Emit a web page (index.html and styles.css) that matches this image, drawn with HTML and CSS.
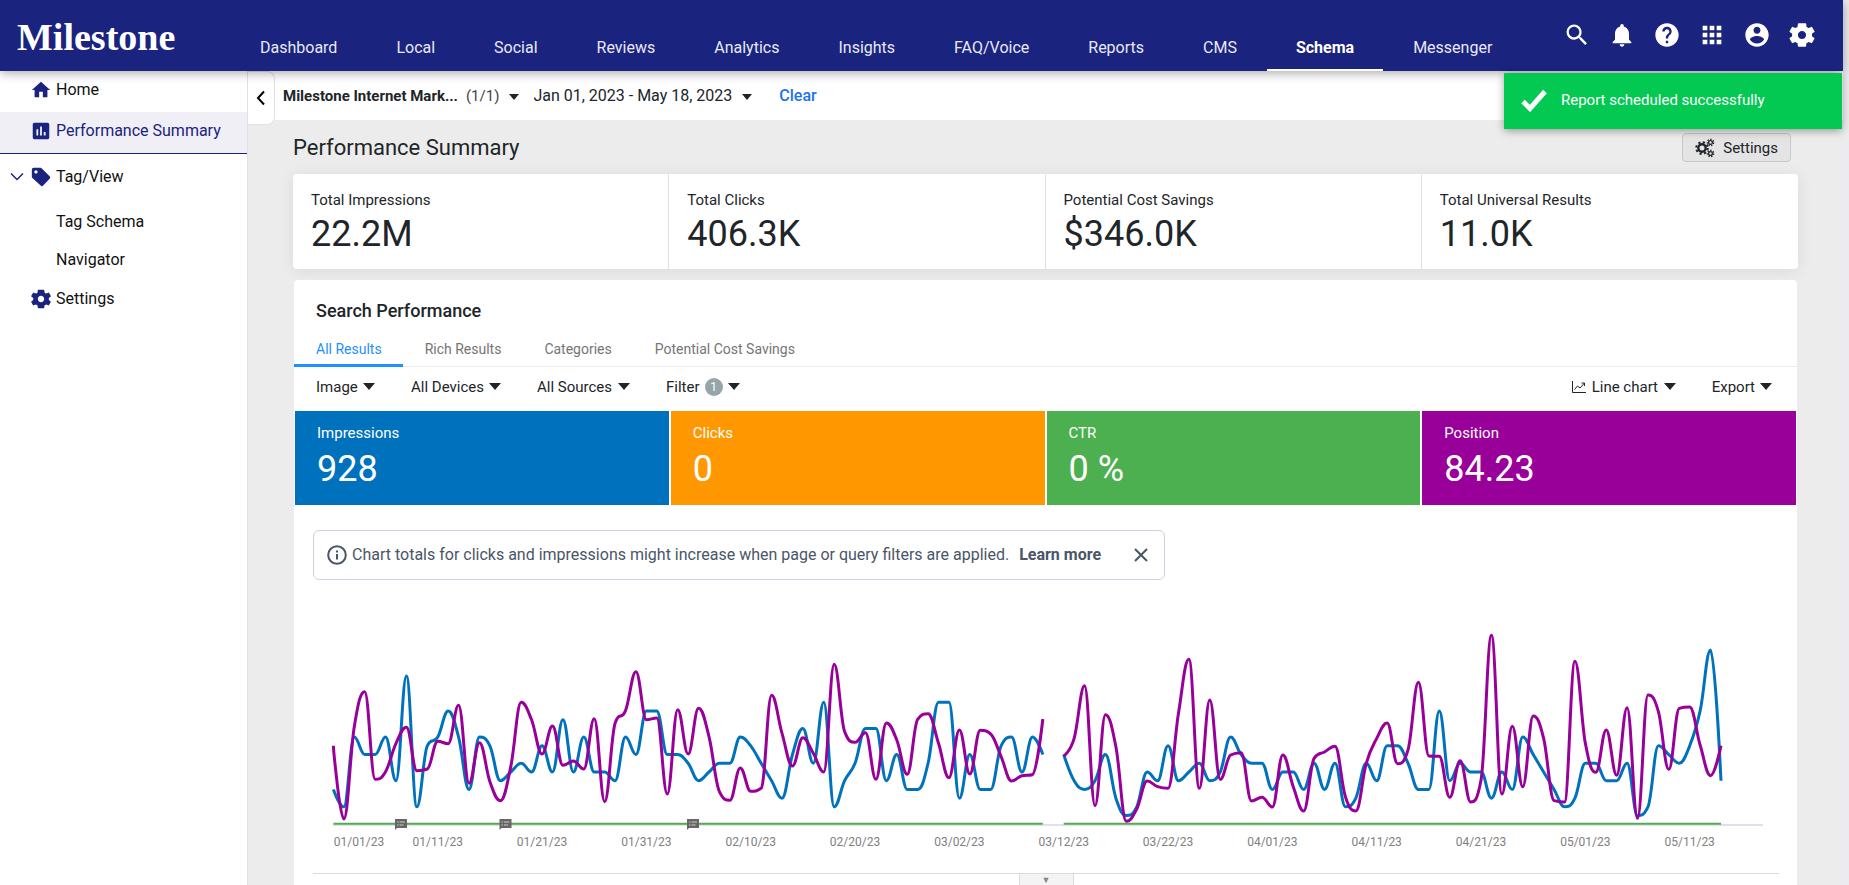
FILE: index.html
```html
<!DOCTYPE html>
<html lang="en">
<head>
<meta charset="utf-8">
<meta name="viewport" content="width=device-width, initial-scale=1">
<title>Performance Summary</title>
<link rel="stylesheet" href="styles.css">
</head>
<body>
<div class="page">
  <header class="topbar">
    <a class="logo" href="#">Milestone</a>
    <nav class="nav" aria-label="Products">
      <a href="#">Dashboard</a><a href="#">Local</a><a href="#">Social</a><a href="#">Reviews</a><a href="#">Analytics</a><a href="#">Insights</a><a href="#">FAQ/Voice</a><a href="#">Reports</a><a href="#">CMS</a><a href="#" class="active" aria-current="page">Schema</a><a href="#">Messenger</a>
    </nav>
    <div class="tools">
      <button aria-label="Search"><svg viewBox="0 0 24 24"><path d="M15.5 14h-.79l-.28-.27A6.47 6.47 0 0 0 16 9.500 6.500 6.500 0 1 0 9.500 16c1.610 0 3.090-.590 4.230-1.570l.270.280v.790l5 4.990L20.490 19zm-6 0C7.010 14 5 11.990 5 9.500S7.010 5 9.500 5 14 7.010 14 9.500 11.990 14 9.500 14z"/></svg></button>
      <button aria-label="Notifications"><svg viewBox="0 0 24 24"><path d="M12 22c1.100 0 2-.900 2-2h-4c0 1.100.890 2 2 2zm6-6v-5c0-3.070-1.640-5.640-4.500-6.320V4c0-.830-.670-1.500-1.500-1.500s-1.500.670-1.500 1.500v.680C7.630 5.360 6 7.920 6 11v5l-2 2v1h16v-1z"/></svg></button>
      <button aria-label="Help"><svg viewBox="0 0 24 24"><path d="M12 2C6.480 2 2 6.480 2 12s4.480 10 10 10 10-4.480 10-10S17.520 2 12 2zm1 17h-2v-2h2zm2.070-7.750-.9.920C13.450 12.900 13 13.500 13 15h-2v-.5c0-1.100.450-2.100 1.170-2.830l1.240-1.260c.370-.360.590-.860.590-1.410 0-1.100-.900-2-2-2s-2 .9-2 2H8c0-2.210 1.790-4 4-4s4 1.790 4 4c0 .880-.360 1.680-.930 2.250z"/></svg></button>
      <button aria-label="Apps"><svg viewBox="0 0 24 24"><path d="M4 8h4V4H4zm6 12h4v-4h-4zm-6 0h4v-4H4zm0-6h4v-4H4zm6 0h4v-4h-4zm6-10v4h4V4zm-6 4h4V4h-4zm6 6h4v-4h-4zm0 6h4v-4h-4z"/></svg></button>
      <button aria-label="Account"><svg viewBox="0 0 24 24"><path d="M12 2C6.480 2 2 6.480 2 12s4.480 10 10 10 10-4.480 10-10S17.520 2 12 2zm0 3c1.660 0 3 1.340 3 3s-1.340 3-3 3-3-1.340-3-3 1.340-3 3-3zm0 14.200c-2.500 0-4.710-1.280-6-3.220.030-1.990 4-3.080 6-3.080 1.990 0 5.970 1.090 6 3.080-1.290 1.940-3.500 3.220-6 3.220z"/></svg></button>
      <button aria-label="Settings"><svg viewBox="0 0 24 24"><use href="#gear"/></svg></button>
    </div>
  </header>

  <div class="body">
    <aside class="sidebar">
      <a class="side-item top" href="#"><svg class="side-icon" viewBox="0 0 24 24"><path d="M10 20v-6h4v6h5v-8h3L12 3 2 12h3v8z"/></svg>Home</a>
      <a class="side-item top current" href="#" aria-current="page"><svg class="side-icon" viewBox="0 0 24 24"><path d="M19 3H5c-1.100 0-2 .9-2 2v14c0 1.100.9 2 2 2h14c1.100 0 2-.9 2-2V5c0-1.100-.9-2-2-2zM9 17H7v-7h2zm4 0h-2V7h2zm4 0h-2v-4h2z"/></svg>Performance Summary</a>
      <a class="side-item group" href="#"><svg class="chevron" viewBox="0 0 14 10"><path d="M1 1.500l6 6 6-6"/></svg><svg class="side-icon" viewBox="0 0 24 24"><path d="M2 4a2 2 0 0 1 2-2h7.500c.5 0 1 .2 1.400.6l8.500 8.500c.8.8.8 2 0 2.800l-7 7.500c-.8.8-2 .8-2.800 0L2.600 13c-.4-.4-.6-.9-.6-1.400z"/><circle cx="6.500" cy="6.500" r="1.800" fill="#fff"/></svg>Tag/View</a>
      <a class="side-item sub tall" href="#">Tag Schema</a>
      <a class="side-item sub" href="#">Navigator</a>
      <a class="side-item" href="#"><svg class="side-icon" viewBox="0 0 24 24"><use href="#gear"/></svg>Settings</a>
    </aside>

    <main class="main">
      <div class="context">
        <button class="collapse" aria-label="Collapse menu"><svg viewBox="0 0 10 16"><path d="M8 1.500L2 8l6 6.500"/></svg></button>
        <button class="picker account"><strong>Milestone Internet Mark...</strong><span class="count">(1/1)</span><span class="caret"></span></button>
        <button class="picker">Jan 01, 2023 - May 18, 2023<span class="caret"></span></button>
        <a class="clear" href="#">Clear</a>
      </div>

      <div class="content">
        <div class="title-row">
          <h1>Performance Summary</h1>
          <button class="settings"><svg viewBox="0 0 20 20"><g fill="none" stroke="currentColor"><circle cx="7" cy="10" r="3.700" stroke-width="2.400"/><circle cx="7" cy="10" r="5.800" stroke-width="2" stroke-dasharray="2.280 2.280"/><circle cx="15.500" cy="4.500" r="1.900" stroke-width="1.300"/><circle cx="15.500" cy="4.500" r="3.200" stroke-width="1.300" stroke-dasharray="1.450 1.420"/><circle cx="15.500" cy="15.500" r="1.900" stroke-width="1.300"/><circle cx="15.500" cy="15.500" r="3.200" stroke-width="1.300" stroke-dasharray="1.450 1.420"/></g></svg>Settings</button>
        </div>

        <section class="totals" aria-label="Totals">
          <div class="total"><span>Total Impressions</span><b>22.2M</b></div>
          <div class="total"><span>Total Clicks</span><b>406.3K</b></div>
          <div class="total"><span>Potential Cost Savings</span><b>$346.0K</b></div>
          <div class="total"><span>Total Universal Results</span><b>11.0K</b></div>
        </section>

        <section class="panel">
          <h2>Search Performance</h2>
          <div class="tabs" role="tablist">
            <button role="tab" aria-selected="true" class="tab selected">All Results</button>
            <button role="tab" aria-selected="false" class="tab">Rich Results</button>
            <button role="tab" aria-selected="false" class="tab">Categories</button>
            <button role="tab" aria-selected="false" class="tab">Potential Cost Savings</button>
          </div>
          <div class="filters">
            <label class="drop"><select aria-label="Search type"><option>Image</option></select><span class="caret"></span></label>
            <label class="drop"><select aria-label="Devices"><option>All Devices</option></select><span class="caret"></span></label>
            <label class="drop"><select aria-label="Sources"><option>All Sources</option></select><span class="caret"></span></label>
            <button class="drop">Filter<span class="badge">1</span><span class="caret"></span></button>
            <label class="drop chart-type"><svg viewBox="0 0 16 14"><path d="M1.500 1v11.500H15" /><path d="M3.500 9.500l3-3.500 2.500 2 4.500-5M10.500 3h3v3"/></svg><select aria-label="Chart type"><option>Line chart</option></select><span class="caret"></span></label>
            <button class="drop">Export<span class="caret"></span></button>
          </div>
          <div class="tiles">
            <div class="tile impressions"><span>Impressions</span><b>928</b></div>
            <div class="tile clicks"><span>Clicks</span><b>0</b></div>
            <div class="tile ctr"><span>CTR</span><b>0 %</b></div>
            <div class="tile position"><span>Position</span><b>84.23</b></div>
          </div>
          <div class="notice">
            <svg class="info" viewBox="0 0 20 20"><circle cx="10" cy="10" r="8.800"/><path d="M10 9v5.500M10 5.500v2"/></svg>
            <p>Chart totals for clicks and impressions might increase when page or query filters are applied.</p>
            <a href="#">Learn more</a>
            <button aria-label="Dismiss"><svg viewBox="0 0 14 14"><path d="M1 1l12 12M13 1L1 13"/></svg></button>
          </div>
          <svg class="chart" id="chart" viewBox="0 0 1466 240" role="img" aria-label="Impressions and position by day"></svg>
          <div class="expander"><button aria-label="Show more">▼</button></div>
        </section>
      </div>
    </main>
  </div>

  <div class="toast" role="status">
    <svg viewBox="0 0 28 24"><path d="M3 13.500l7 7L25 3.500"/></svg>
    Report scheduled successfully
  </div>
</div>

<svg class="defs" aria-hidden="true"><defs><path id="gear" d="M20.500 12.980c.040-.320.070-.640.070-.980s-.030-.660-.070-.980l2.110-1.650c.190-.150.240-.420.120-.640l-2-3.460c-.120-.220-.390-.300-.610-.220l-2.490 1c-.520-.400-1.080-.730-1.690-.980l-.380-2.650A.488.488 0 0 0 15 2h-6c-.250 0-.460.180-.490.420l-.380 2.650c-.610.250-1.170.590-1.690.980l-2.490-1c-.230-.090-.490 0-.610.220l-2 3.460c-.130.220-.070.490.120.640l2.110 1.650c-.040.320-.070.650-.070.980s.030.660.070.980l-2.110 1.650c-.190.150-.240.420-.120.640l2 3.460c.120.220.390.300.610.220l2.490-1c.520.400 1.080.730 1.690.980l.380 2.650c.030.240.240.420.490.420h6c.250 0 .460-.180.490-.420l.380-2.650c.610-.250 1.170-.590 1.690-.980l2.490 1c.230.090.490 0 .610-.220l2-3.460c.120-.220.070-.490-.120-.640zM12 15.500c-1.930 0-3.500-1.570-3.500-3.500s1.570-3.500 3.500-3.500 3.500 1.570 3.500 3.500-1.570 3.500-3.500 3.500z"/></defs></svg>
<script src="chart.js"></script>
</body>
</html>
```
FILE: styles.css
```css
* {
  box-sizing: border-box;
}

html {
  background: #ececf0;
}

body {
  margin: 0;
  font-family: Roboto, "Liberation Sans", sans-serif;
  font-size: 16px;
  line-height: 20px;
  color: #212529;
}

button,
select {
  font: inherit;
  color: inherit;
  background: none;
  border: 0;
  padding: 0;
  margin: 0;
  cursor: pointer;
}

select {
  appearance: none;
}

a {
  color: inherit;
  text-decoration: none;
}

h1,
h2,
p {
  margin: 0;
}

.defs {
  position: absolute;
  width: 0;
  height: 0;
}

.page {
  position: relative;
  margin-right: 6px;
  min-height: 100vh;
  display: flex;
  flex-direction: column;
}

/* Top bar */

.topbar {
  position: relative;
  z-index: 2;
  display: flex;
  align-items: stretch;
  height: 71px;
  background: #1a237e;
  color: #fff;
  box-shadow: 0 2px 10px rgba(0, 0, 0, 0.35);
}

.logo {
  width: 231px;
  padding: 14px 0 0 17px;
  font-family: "Liberation Serif", serif;
  font-size: 38px;
  font-weight: 700;
  line-height: 46px;
}

.nav {
  display: flex;
  gap: 1px;
}

.nav a {
  padding: 38px 29px 0;
  border-bottom: 2px solid transparent;
  color: #e8e9f4;
}

.nav .active {
  color: #fff;
  font-weight: 700;
  border-color: #fff;
}

.tools {
  display: flex;
  gap: 17px;
  margin-left: auto;
  padding: 21px 27px 0 0;
}

.tools button,
.tools svg {
  display: block;
  width: 28px;
  height: 28px;
  fill: #fff;
}

.body {
  flex: 1;
  display: flex;
}

/* Sidebar */

.sidebar {
  flex: none;
  width: 248px;
  background: #fff;
  border-right: 1px solid #dee2e6;
  color: #111;
}

.side-item {
  display: flex;
  align-items: center;
  height: 46px;
  padding-left: 30px;
  gap: 4px;
}

.side-item.top {
  height: 41px;
  padding-bottom: 3px;
}

.side-item.current {
  height: 42px;
  background: #f0eff6;
  border-bottom: 1px solid #1a237e;
  color: #1a237e;
}

.side-item.group {
  padding-left: 10px;
}

.side-item.sub {
  height: 32px;
  padding-left: 56px;
}

.side-item.tall {
  height: 44px;
}

.side-icon {
  width: 22px;
  height: 22px;
  fill: #1a237e;
}

.chevron {
  width: 14px;
  height: 10px;
  margin-right: 2px;
  fill: none;
  stroke: #1a237e;
  stroke-width: 1.500;
}

/* Context bar */

.main {
  flex: 1;
  min-width: 0;
  display: flex;
  flex-direction: column;
  background: #ececec;
}

.context {
  display: flex;
  align-items: center;
  height: 49px;
  background: #fff;
}

.collapse {
  align-self: flex-start;
  display: grid;
  place-items: center;
  width: 27px;
  height: 54px;
  margin-right: 8px;
  background: #fff;
  border: 1px solid #dee2e6;
  border-left: 0;
  border-radius: 0 8px 8px 0;
}

.collapse svg {
  width: 10px;
  height: 16px;
  fill: none;
  stroke: #000;
  stroke-width: 2;
}

.picker {
  display: flex;
  align-items: center;
  margin-right: 14px;
}

.picker.account {
  font-size: 15px;
}

.count {
  margin-left: 8px;
  color: #444;
}

.caret {
  border: 5px solid transparent;
  border-top: 6px solid #212529;
  border-bottom: 0;
}

.picker .caret {
  margin: 2px 0 0 10px;
}

.clear {
  margin-left: 13px;
  color: #1a73f0;
  font-weight: 500;
}

/* Content */

.content {
  flex: 1;
  display: flex;
  flex-direction: column;
  padding: 13px 45px 0;
}

.title-row {
  display: flex;
  align-items: center;
  justify-content: space-between;
  padding-right: 7px;
  margin-bottom: 12px;
}

h1 {
  font-size: 22px;
  line-height: 28px;
  font-weight: 400;
}

.settings {
  display: flex;
  align-items: center;
  gap: 8px;
  height: 29px;
  padding: 0 12px;
  background: #e4e4e4;
  border: 1px solid #c8c8c8;
  border-radius: 4px;
  font-size: 15px;
}

.settings svg {
  width: 20px;
  height: 20px;
}

.totals {
  display: grid;
  grid-template-columns: repeat(4, 1fr);
  background: #fff;
  border-radius: 4px;
  box-shadow: 0 2px 16px rgba(0, 0, 0, 0.08);
}

.total {
  display: flex;
  flex-direction: column;
  height: 95px;
  padding: 16px 18px 0;
  border-right: 1px solid #dee2e6;
  font-size: 15px;
}

.total:last-child {
  border-right: 0;
}

.total b,
.tile b {
  font-size: 36px;
  line-height: 48px;
  font-weight: 400;
}

.panel {
  flex: 1;
  margin: 11px 1px 0;
  background: #fff;
  border-radius: 4px 4px 0 0;
}

h2 {
  padding: 20px 22px 16px;
  font-size: 18px;
  line-height: 22px;
  font-weight: 500;
}

.tabs {
  display: flex;
  border-bottom: 1px solid #ebebeb;
  font-size: 14px;
  color: #757575;
}

.tab {
  height: 29px;
  margin-bottom: -1px;
  padding: 2px 21px 6px 22px;
  border-bottom: 3px solid transparent;
  line-height: 18px;
}

.tab.selected {
  color: #1e90ff;
  border-color: #1e90ff;
}

.filters {
  display: flex;
  align-items: center;
  gap: 36px;
  height: 44px;
  padding: 0 25px 4px 22px;
  font-size: 15px;
}

.drop {
  display: flex;
  align-items: center;
  gap: 5px;
  height: 20px;
}

.drop .caret {
  border-width: 7px 6px 0;
  margin-bottom: 2px;
}

.badge {
  width: 18px;
  height: 18px;
  border-radius: 9px;
  background: #95a5a9;
  color: #fff;
  font-size: 12px;
  line-height: 18px;
  text-align: center;
}

.chart-type {
  margin-left: auto;
}

.chart-type svg {
  width: 16px;
  height: 14px;
  fill: none;
  stroke: #212529;
}

.tiles {
  display: grid;
  grid-template-columns: repeat(4, 1fr);
  gap: 2px;
  padding: 0 1px;
  color: #fff;
}

.tile {
  display: flex;
  flex-direction: column;
  height: 94px;
  padding: 12px 22px 0;
  font-size: 15px;
}

.tile b {
  line-height: 52px;
}

.impressions {
  background: #0072bd;
}

.clicks {
  background: #ff9800;
}

.ctr {
  background: #4caf50;
}

.position {
  background: #990099;
}

/* Notice */

.notice {
  display: flex;
  align-items: center;
  width: fit-content;
  height: 50px;
  margin: 25px 19px 0;
  padding: 0 16px 0 13px;
  border: 1px solid #cbd2e0;
  border-radius: 6px;
  color: #4a5568;
}

.notice .info {
  width: 20px;
  height: 20px;
  margin-right: 5px;
}

.notice svg {
  display: block;
  fill: none;
  stroke: #4a5568;
  stroke-width: 2;
}

.notice a {
  margin: 0 33px 0 10px;
  font-weight: 700;
}

.notice button svg {
  width: 14px;
  height: 14px;
}

/* Chart */

.chart {
  display: block;
  width: calc(100% - 37px);
  margin: 40px 18px 0 19px;
}

.chart path {
  fill: none;
}

.chart .line {
  stroke-width: 3;
  stroke-linejoin: round;
}

.line-impressions {
  stroke: #0072bd;
}

.line-position {
  stroke: #990099;
}

.line-ctr {
  stroke: #55ab4c;
  stroke-width: 2;
}

.axis {
  stroke: #dde1ee;
  stroke-width: 2;
}

.chart text {
  font-size: 12px;
  fill: #808080;
  text-anchor: middle;
}

.chart .note {
  fill: #666;
}

.chart .note-lines {
  stroke: #ccc;
}

.expander {
  display: flex;
  justify-content: center;
  margin: 13px 18px 0 19px;
  border-top: 1px solid #dcdcdc;
}

.expander button {
  width: 55px;
  height: 11px;
  background: #f4f4f4;
  border: 1px solid #dcdcdc;
  border-width: 0 1px;
  color: #888;
  font-size: 9px;
  line-height: 10px;
}

/* Toast */

.toast {
  position: absolute;
  z-index: 3;
  top: 73px;
  right: 1px;
  display: flex;
  align-items: center;
  gap: 13px;
  width: 338px;
  height: 56px;
  padding: 0 16px 2px;
  background: #03c851;
  box-shadow: 0 2px 8px rgba(0, 0, 0, 0.35);
  color: #fff;
  font-size: 15px;
}

.toast svg {
  width: 28px;
  height: 24px;
  fill: none;
  stroke: #fff;
  stroke-width: 5;
}
```
FILE: chart.js
```js
const NS = "http://www.w3.org/2000/svg";
const chart = document.getElementById("chart");
const START = 20.4;
const STEP = 10.433;
const BASE = 204.3;

// Daily impressions; null marks a day without data.
const impressions = [
  4,2,10,8,8,10,5,17,2,9,10,13,10,4,10,9,5,6,7,6,9,6,12,6,10,6,6,5,10,8,
  13,13,8,8,7,5,6,7,7,10,9,7,5,3,8,11,7,14,2,5,7,11,11,5,8,4,4,7,14,14,
  3,8,4,4,9,10,6,10,8,null,8,5,4,5,8,3,1,2,6,5,9,5,6,7,5,6,10,8,7,7,
  4,6,6,4,7,4,7,2,3,7,5,9,9,7,4,4,13,5,7,6,6,3,6,4,10,8,6,4,2,3,
  7,7,5,5,7,1,2,9,8,7,9,13,20,5
];

// Daily average position, in thirds of a unit measured from the top.
const position = [
  377,597,320,215,478,455,370,322,452,447,364,371,256,490,368,485,542,440,247,300,
  402,318,436,423,447,296,545,310,272,155,299,294,522,269,402,265,350,515,541,444,
  514,505,226,340,438,353,400,456,133,335,367,338,478,309,360,463,298,281,370,473,
  330,462,331,342,410,483,467,464,297,null,408,355,197,557,284,380,604,567,483,500,
  505,280,118,505,240,478,405,398,543,532,561,405,500,573,415,396,379,530,573,430,
  355,309,431,390,187,408,409,532,422,546,480,46,522,319,500,288,355,542,546,124,
  370,457,330,466,263,595,225,275,448,265,261,375,467,377
];

function add(tag, attrs, text) {
  const el = document.createElementNS(NS, tag);
  for (const key in attrs) el.setAttribute(key, attrs[key]);
  if (text) el.textContent = text;
  chart.appendChild(el);
}

function segments(values, toY) {
  const out = [[]];
  values.forEach((v, i) => {
    if (v === null) out.push([]);
    else out[out.length - 1].push([START + i * STEP, toY(v)]);
  });
  return out;
}

// Smooth curve whose control points never overshoot the neighbouring values.
function spline(points) {
  let d = "M" + points[0].join(" ");
  let prev = points[0];
  for (let i = 1; i < points.length; i++) {
    const [x, y] = points[i];
    const [lx, ly] = points[i - 1];
    let left = [x, y];
    let right = [x, y];
    if (i < points.length - 1) {
      const [nx, ny] = points[i + 1];
      const cx = (1.5 * x + lx) / 2.5;
      const rx = (1.5 * x + nx) / 2.5;
      let cy = (1.5 * y + ly) / 2.5;
      let ry = (1.5 * y + ny) / 2.5;
      const fix = (ry - cy) * (rx - x) / (rx - cx) + y - ry;
      cy += fix;
      ry += fix;
      if (cy > ly && cy > y) { cy = Math.max(ly, y); ry = 2 * y - cy; }
      else if (cy < ly && cy < y) { cy = Math.min(ly, y); ry = 2 * y - cy; }
      if (ry > ny && ry > y) { ry = Math.max(ny, y); cy = 2 * y - ry; }
      else if (ry < ny && ry < y) { ry = Math.min(ny, y); cy = 2 * y - ry; }
      left = [cx, cy];
      right = [rx, ry];
    }
    d += "C" + [...prev, ...left, x, y].map(n => n.toFixed(2)).join(" ");
    prev = right;
  }
  return d;
}

add("path", { class: "axis", d: "M20 205H1450" });
for (const s of segments(impressions, v => BASE - v * 8.72)) {
  add("path", { class: "line line-impressions", d: spline(s) });
  add("path", { class: "line-ctr", d: `M${s[0][0]} 203.7H${s[s.length - 1][0]}` });
}
for (const s of segments(position, v => v / 3)) {
  add("path", { class: "line line-position", d: spline(s) });
}

for (const x of [88, 192.5, 380]) {
  add("path", { class: "note", style: "fill:#666", d: `M${x - 6} 199h12v9h-10l-2 2z` });
  add("path", { class: "note-lines", d: `M${x - 4} 202h1.500M${x - 1.5} 202h5.500M${x - 4} 205h1.500M${x - 1.5} 205h4` });
}

const labels = [
  "01/01/23", "01/11/23", "01/21/23", "01/31/23", "02/10/23", "02/20/23", "03/02/23",
  "03/12/23", "03/22/23", "04/01/23", "04/11/23", "04/21/23", "05/01/23", "05/11/23"
];
labels.forEach((label, i) => {
  add("text", { x: i ? START + i * 10 * STEP : 46, y: 226 }, label);
});
```
